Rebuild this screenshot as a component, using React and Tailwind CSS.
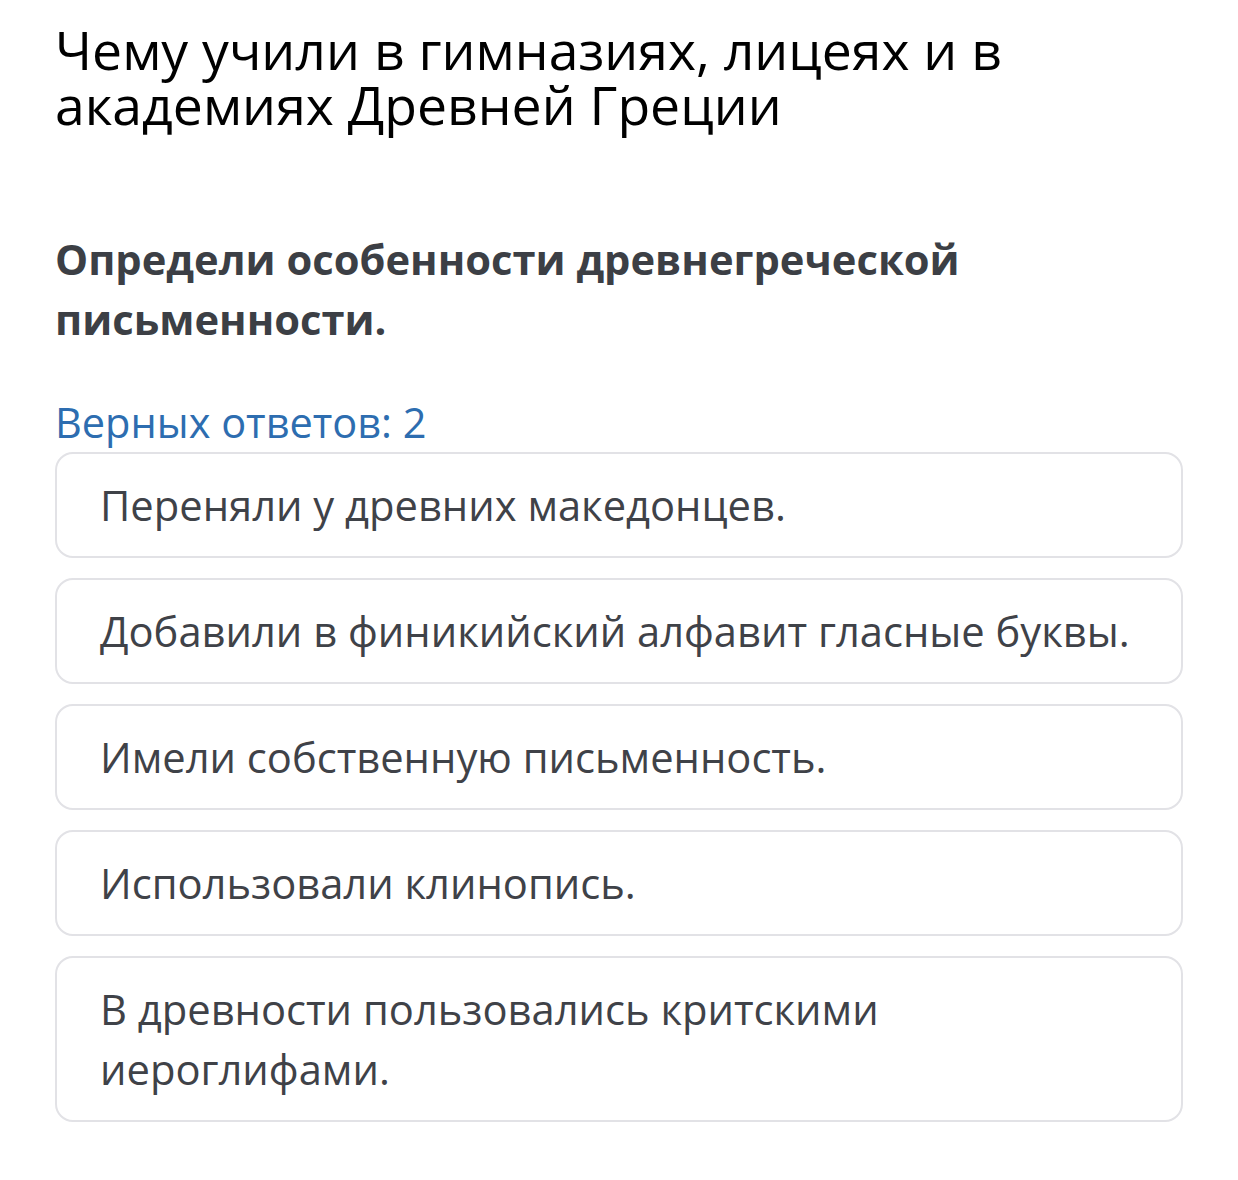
import React from 'react';

const options = [
    'Переняли у древних македонцев.',
    'Добавили в финикийский алфавит гласные буквы.',
    'Имели собственную письменность.',
    'Использовали клинопись.',
    'В древности пользовались критскими иероглифами.',
];

const App = () => {
    return (
        <div className="min-h-screen bg-white" style={{ fontFamily: '"Open Sans", "Noto Sans", sans-serif' }}>
            <div className="pl-[55px] pr-[55px] pt-[22px] pb-10">
                <h1 className="text-[53.5px] leading-[55px] font-normal text-black">
                    Чему учили в гимназиях, лицеях и в академиях Древней Греции
                </h1>

                <p className="mt-[97px] text-[41.7px] leading-[60px] font-bold text-[#3c3f45] pr-[200px]">
                    Определи особенности древнегреческой письменности.
                </p>

                <p className="mt-[43px] text-[41.5px] leading-[60px] text-[#2d6db0]">
                    Верных ответов: 2
                </p>

                <div className="flex flex-col gap-[20px]">
                    {options.map((text, idx) => (
                        <div
                            key={idx}
                            className="border-2 border-[#e2e2e6] rounded-[18px] pl-[43px] pr-[20px] py-[21px]"
                        >
                            <p className={`text-[41.7px] leading-[60px] text-[#3f4248] ${idx === 4 ? 'pr-[260px]' : ''}`}>{text}</p>
                        </div>
                    ))}
                </div>
            </div>
        </div>
    );
};

export default App;
